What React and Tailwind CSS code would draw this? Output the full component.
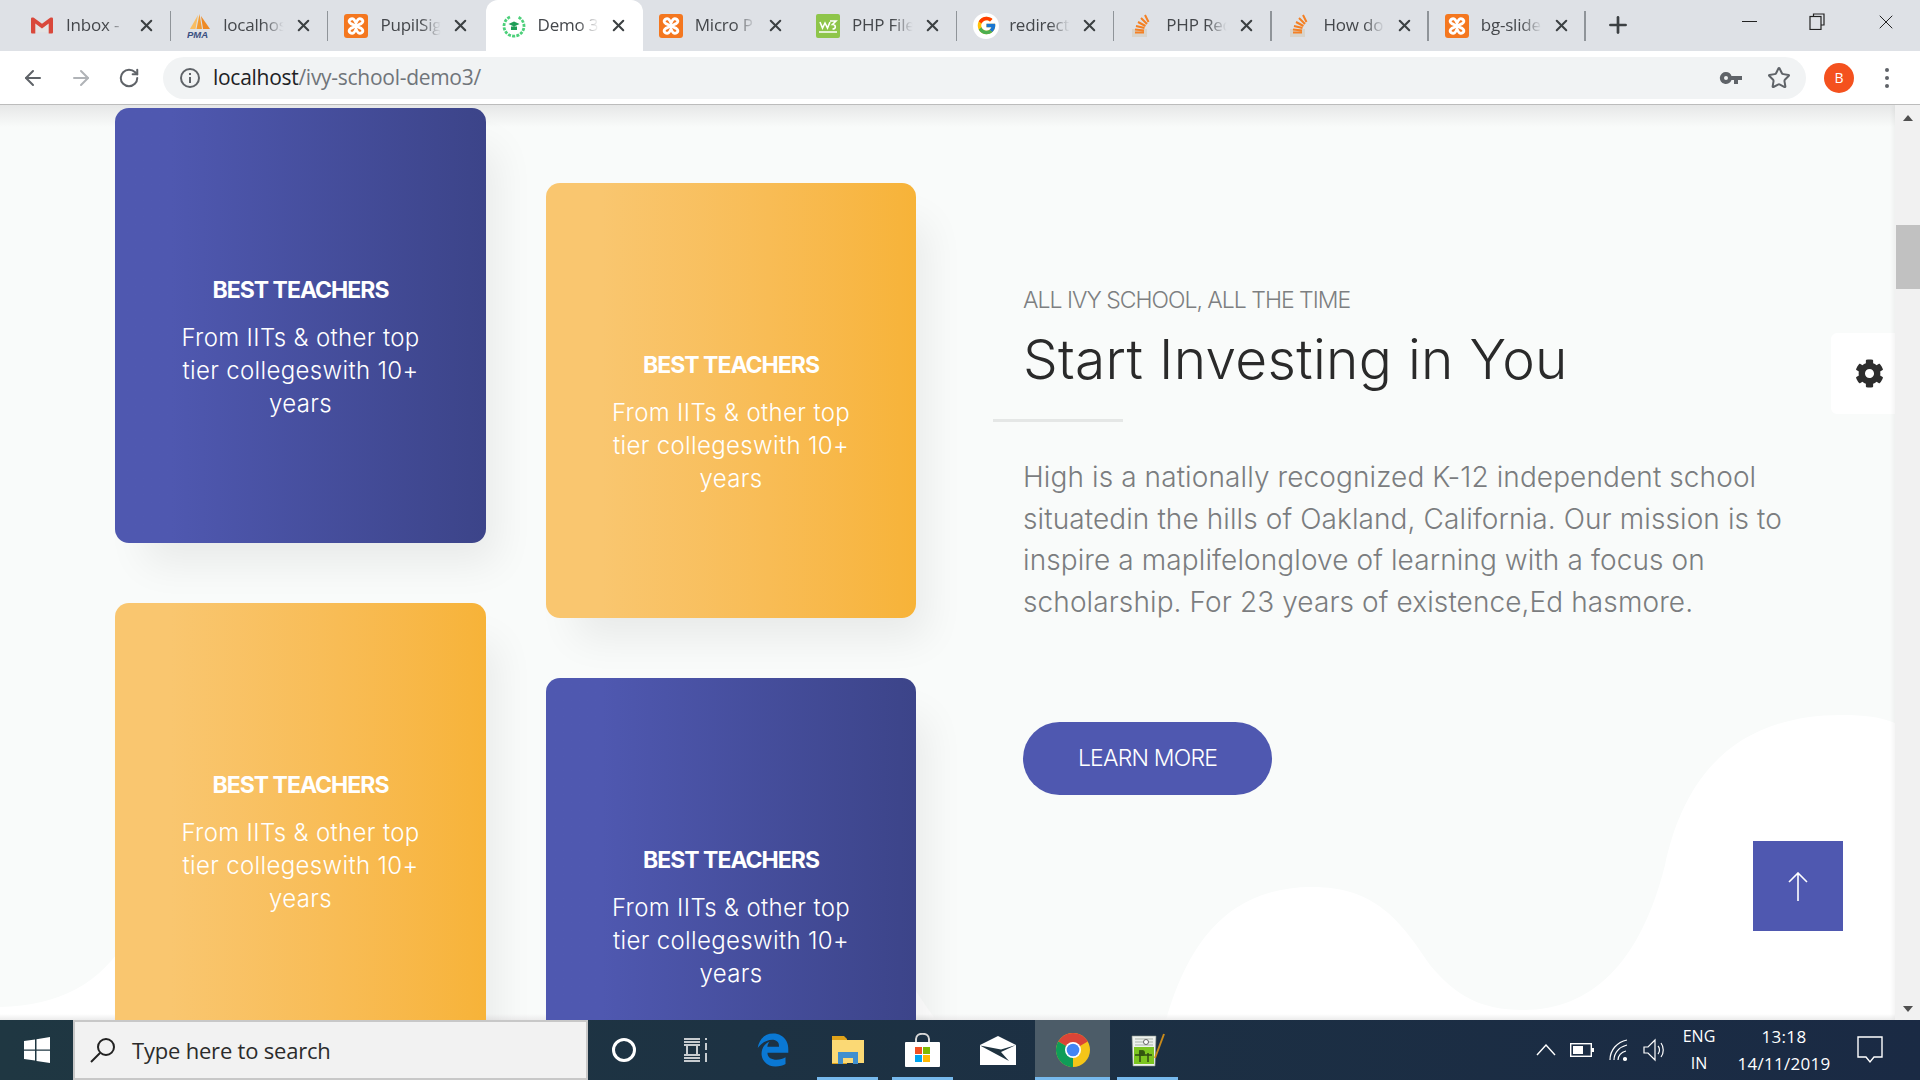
import React from "react";
import { ArrowLeft, ArrowRight, RotateCw, Star, Plus, X } from "lucide-react";
import { FaCog, FaEdgeLegacy } from "react-icons/fa";
import { FcGoogle } from "react-icons/fc";

const Gmail = () => (
  <svg width="22" height="17" viewBox="0 0 23 20" preserveAspectRatio="none" className="ml-[1px]">
    <path d="M2 2 L11.5 10 L21 2 V18 H2 Z" fill="#e4e4e4" />
    <path d="M0 2 C0 .5 1.500 0 3 1 L11.5 8 L20 1 C21.500 0 23 .5 23 2 V18 C23 19 22.500 19.500 21.500 19.500 H18.500 V7.500 L11.500 13.500 L4.500 7.500 V19.500 H1.500 C.5 19.500 0 19 0 18 Z" fill="#d9483b" />
  </svg>
);
const Pma = () => (
  <svg width="24" height="24" viewBox="0 0 24 24">
    <path d="M3 15 L11 1 L8.500 15 Z" fill="#f8bd62" />
    <path d="M9.500 15 L12.500 0 L15 15 Z" fill="#f29b32" />
    <path d="M16 15 L14 2 L23 15 Z" fill="#ee8a25" />
    <text x="0" y="23.500" fontSize="9.500" fontWeight="700" fontStyle="italic" fill="#3b4f81" fontFamily="Liberation Sans, sans-serif">PMA</text>
  </svg>
);
const Xampp = () => (
  <svg width="24" height="24" viewBox="0 0 24 24">
    <rect x="0" y="0" width="24" height="24" rx="3" fill="#f4771f" />
    <path d="M6 5.500 C9 3.500 10.500 5.500 12 9 C13.500 5.500 15 3.500 18 5.500 C20 7.500 18 10 15 10.500 C13 11 13 13 15 13.500 C18 14 20 16.500 18 18.500 C15 20.500 13.500 18.500 12 15 C10.500 18.500 9 20.500 6 18.500 C4 16.500 6 14 9 13.500 C11 13 11 11 9 10.500 C6 10 4 7.500 6 5.500 Z" fill="none" stroke="#fff" strokeWidth="2.800" />
  </svg>
);
const W3 = () => (
  <svg width="24" height="24" viewBox="0 0 24 24">
    <rect width="24" height="24" rx="2" fill="#8ec54a" />
    <path d="M4 8 L6.500 14 L9 9 L11.500 14 L14 8 M14 7 H20 L16.500 10.500 C20 10.500 20.500 15 16.500 15 M3 18 H21" fill="none" stroke="#fff" strokeWidth="1.600" />
  </svg>
);
const Ivy = () => (
  <svg width="24" height="28" viewBox="0 0 24 28">
    <path d="M8 5 A10 10 0 1 0 16 5" fill="none" stroke="#4cd07a" strokeWidth="2.800" strokeDasharray="3 1.200" />
    <path d="M6.500 12 L12 9.500 L17.500 12 L12 14.500 Z M9 14.500 H15 V18 H9 Z" fill="#1f9d57" />
  </svg>
);
const Stack = () => (
  <svg width="22" height="26" viewBox="0 0 22 26">
    <path d="M2 16 V24 H17 V16" fill="#d8d4cc" />
    <path d="M5 19.500 H14 M5 16.500 L14 17.500 M6 13 L14.500 15 M8 9 L15.500 13 M11 5 L17 11 M15 2 L18.500 9" stroke="#f48024" strokeWidth="2" fill="none" />
  </svg>
);
const GIcon = () => (
  <span className="flex h-[26px] w-[26px] items-center justify-center rounded-full bg-white">
    <FcGoogle size={21} />
  </span>
);

const tabs = [
  { label: "Inbox -", Icon: Gmail },
  { label: "localhost", Icon: Pma },
  { label: "PupilSig", Icon: Xampp },
  { label: "Demo 3", Icon: Ivy, active: true },
  { label: "Micro P", Icon: Xampp },
  { label: "PHP File", Icon: W3 },
  { label: "redirect", Icon: GIcon },
  { label: "PHP Req", Icon: Stack },
  { label: "How do", Icon: Stack },
  { label: "bg-slide", Icon: Xampp },
];

function Tab({ label, Icon, active, noSep }) {
  return (
    <div className={active ? "relative flex h-[51px] w-[157.200px] shrink-0 items-center rounded-t-[12px] bg-white pl-[16px]" : "relative flex h-[51px] w-[157.200px] shrink-0 items-center pl-[16px]"}>
      <div className="flex w-[36px] shrink-0 items-center"><Icon /></div>
      <div className="mb-[2px] w-[62px] overflow-hidden whitespace-nowrap font-['Open_Sans',sans-serif] text-[17px] tracking-[-0.2px] text-[#44474b] [mask-image:linear-gradient(to_right,black_65%,transparent_98%)]">{label}</div>
      <X size={19} strokeWidth={2.600} className="ml-[9px] text-[#3c4043]" />
      {!noSep && <div className="absolute right-0 top-[11px] h-[30px] w-[1.500px] bg-[#8f9499]" />}
    </div>
  );
}

function BrowserChrome() {
  return (
    <div className="shrink-0">
      <div className="flex h-[51px] items-start bg-[#dee1e6] pl-[14px]">
        {tabs.map((t, i) => (
          <Tab key={i} {...t} noSep={t.active || i === 2 || i === 4} />
        ))}
        <Plus size={26} strokeWidth={2.500} className="ml-[19px] mt-[12px] text-[#3c4043]" />
        <div className="ml-auto flex h-[43px] items-center text-[#3c4043]">
          <div className="flex w-[68px] justify-center"><div className="h-[1.500px] w-[15px] bg-[#222]" /></div>
          <div className="flex w-[68px] justify-center">
            <svg width="16" height="17" viewBox="0 0 16 17" fill="none" stroke="#222" strokeWidth="1.200"><path d="M4.500 3 V1 H15 V12 H12" /><rect x="1" y="3.500" width="11" height="13" /></svg>
          </div>
          <div className="flex w-[69px] justify-center">
            <X size={24} strokeWidth={1} className="text-[#222]" />
          </div>
        </div>
      </div>
      <div className="flex h-[54px] items-center border-b border-[#bcbcbc] bg-white">
        <div className="flex w-[163px] shrink-0 items-center">
          <ArrowLeft size={24} strokeWidth={2} className="ml-[21px] text-[#5f6368]" />
          <ArrowRight size={24} strokeWidth={2} className="ml-[24px] text-[#b0b3b7]" />
          <RotateCw size={22} strokeWidth={2.200} className="ml-[25px] text-[#5f6368]" />
        </div>
        <div className="flex h-[42px] w-[1643px] items-center rounded-full bg-[#f1f3f4] pl-[16px]">
          <svg width="22" height="22" viewBox="0 0 22 22" fill="none" stroke="#5f6368" strokeWidth="2"><circle cx="11" cy="11" r="9" /><path d="M11 10 V16 M11 6 V8" /></svg>
          <div className="ml-[12px] mt-[1px] font-['Open_Sans',sans-serif] text-[21px] tracking-[-0.28px] text-[#202124]">localhost<span className="text-[#70757a]">/ivy-school-demo3/</span></div>
          <div className="ml-auto flex items-center pr-[15px]">
            <svg width="24" height="14" viewBox="0 0 24 14" fill="#5f6368"><path d="M7 1 A6 6 0 1 0 12.500 9 H15 V13 H19 V9 H23 V5 H12.500 A6 6 0 0 0 7 1 Z M7 5 A2 2 0 1 1 7 9 A2 2 0 0 1 7 5 Z" fillRule="evenodd" /></svg>
            <Star size={24} strokeWidth={2} className="ml-[24px] text-[#5f6368]" />
          </div>
        </div>
        <div className="ml-[18px] flex h-[30px] w-[30px] items-center justify-center rounded-full bg-[#f4511e] font-['Open_Sans',sans-serif] text-[14px] text-white">B</div>
        <div className="ml-[31px] flex flex-col gap-[4px]">
          <span className="h-[4px] w-[4px] rounded-full bg-[#5f6368]" />
          <span className="h-[4px] w-[4px] rounded-full bg-[#5f6368]" />
          <span className="h-[4px] w-[4px] rounded-full bg-[#5f6368]" />
        </div>
      </div>
    </div>
  );
}

const blue = "flex h-[435px] shrink-0 flex-col items-center rounded-[14px] bg-gradient-to-r from-[#4f58b0] from-15% to-[#3c4489] pt-[164px] text-center text-white shadow-[20px_30px_40px_-10px_rgba(0,0,0,0.07)]";
const orange = "flex h-[435px] shrink-0 flex-col items-center rounded-[14px] bg-gradient-to-r from-[#f9c66f] from-15% to-[#f7b338] pt-[164px] text-center text-white shadow-[20px_30px_40px_-10px_rgba(0,0,0,0.07)]";

function Card({ cls }) {
  return (
    <div className={cls}>
      <div className="font-['Inter',sans-serif] text-[23px] leading-[36px] font-bold tracking-[-1px]">BEST TEACHERS</div>
      <div className="mt-[13px] font-['Inter',sans-serif] text-[24px] leading-[33px] font-light tracking-[0.35px]">
        From IITs &amp; other top<br />tier collegeswith 10+<br />years
      </div>
    </div>
  );
}

function Content() {
  return (
    <div className="relative flex min-h-0 flex-1 overflow-hidden bg-[#f9fbfa]">
      <div className="relative min-w-0 flex-1 overflow-hidden">
        <svg className="absolute left-0 top-0" width="1895" height="915" viewBox="0 0 1895 915" fill="#ffffff">
          <path d="M1166 915 C1185 850,1220 782,1312 782 C1375 782,1400 815,1430 860 C1455 890,1480 905,1523 905 C1590 905,1640 860,1665 760 C1680 690,1720 610,1842 610 C1865 610,1880 612,1895 618 V915 Z" />
          <path d="M0 902 C60 900,100 880,130 830 L300 830 L300 915 L0 915 Z" />
          <path d="M800 830 L900 860 C915 885,925 900,936 915 L800 915 Z" />
        </svg>
        <div className="pointer-events-none absolute inset-x-0 top-0 h-[22px] bg-gradient-to-b from-[#e6e7e7] to-transparent" />
        <div className="pointer-events-none absolute inset-x-0 bottom-0 h-[6px] bg-gradient-to-t from-[#ececec] to-transparent" />
        <div className="relative flex pl-[115px]">
          <div className="flex w-[371px] flex-col gap-[60px] pt-[3px]">
            <Card cls={blue} />
            <Card cls={orange} />
          </div>
          <div className="ml-[60px] flex w-[370px] flex-col gap-[60px] pt-[78px]">
            <Card cls={orange} />
            <Card cls={blue} />
          </div>
          <div className="ml-[77px] flex w-[780px] flex-col pt-[178px]">
            <div className="ml-[30px] font-['Inter',sans-serif] text-[23px] leading-[34px] font-light tracking-[-1px] text-[#7d7f81]">ALL IVY SCHOOL, ALL THE TIME</div>
            <div className="ml-[30px] mt-[7px] font-['Inter',sans-serif] text-[55px] leading-[70px] font-[350] tracking-[0.3px] text-[#2a2a2a]">Start Investing in You</div>
            <div className="mt-[25px] h-[3px] w-[130px] bg-[#e5e7e6]" />
            <div className="ml-[30px] mt-[35px] font-['Inter',sans-serif] text-[28px] leading-[41.700px] font-light tracking-[0.1px] whitespace-nowrap text-[#7b7d7f]">
              High is a nationally recognized K-12 independent school<br />
              situatedin the hills of Oakland, California. Our mission is to<br />
              inspire a maplifelonglove of learning with a focus on<br />
              scholarship. For 23 years of existence,Ed hasmore.
            </div>
            <div className="ml-[30px] mt-[98px] flex h-[73px] w-[249px] items-center justify-center rounded-full bg-[#4f58b0] font-['Inter',sans-serif] text-[23px] font-light tracking-[-0.8px] text-white">LEARN MORE</div>
          </div>
        </div>
        <div className="absolute right-0 top-[228px] flex h-[81px] w-[64px] items-center justify-center rounded-l-[6px] bg-white pl-[12px] text-[#2d2d2d]">
          <FaCog size={29} />
        </div>
        <div className="absolute right-[52px] top-[736px] flex h-[90px] w-[90px] items-center justify-center bg-[#4f58b0]">
          <svg width="20" height="29" viewBox="0 0 20 29" fill="none" stroke="#fff" strokeWidth="1.600"><path d="M10 29 V1 M1 10 L10 1 L19 10" /></svg>
        </div>
      </div>
      <div className="relative flex w-[25px] shrink-0 flex-col items-center bg-[#f1f1f1] shadow-[-2px_0_4px_rgba(0,0,0,0.05)]">
        <div className="mt-[10px] h-0 w-0 border-x-[5px] border-b-[6px] border-x-transparent border-b-[#505050]" />
        <div className="mt-[104px] h-[64px] w-[24px] self-end bg-[#c1c1c1]" />
        <div className="mt-auto mb-[8px] h-0 w-0 border-x-[5px] border-t-[6px] border-x-transparent border-t-[#505050]" />
      </div>
    </div>
  );
}

const Edge = () => <FaEdgeLegacy size={34} color="#0a78d4" />;
const Folder = () => (
  <svg width="34" height="30" viewBox="0 0 34 30">
    <path d="M1 1 H13 L16 4 V29 H1 Z" fill="#e0a31a" />
    <path d="M1 5 H33 V28 H1 Z" fill="#fbd975" />
    <path d="M7 29 V17 H27 V29 H22 V23 H12 V29 Z" fill="#3f8fcf" />
  </svg>
);
const Store = () => (
  <svg width="35" height="34" viewBox="0 0 35 34">
    <path d="M11 10 V6 C11 -1 24 -1 24 6 V10" fill="none" stroke="#d8d8d8" strokeWidth="2" />
    <rect x="0" y="9" width="35" height="25" rx="1" fill="#fff" />
    <rect x="10" y="14" width="7" height="7" fill="#f25022" />
    <rect x="18" y="14" width="7" height="7" fill="#7fba00" />
    <rect x="10" y="22" width="7" height="7" fill="#00a4ef" />
    <rect x="18" y="22" width="7" height="7" fill="#ffb900" />
  </svg>
);
const Mail = () => (
  <svg width="36" height="29" viewBox="0 0 36 29">
    <path d="M0 9 L18 0 L36 9 V29 H0 Z" fill="#fff" />
    <path d="M0 9.500 L21 13.500 L36 9 L21 16 L29 25 Z" fill="#1f3340" />
  </svg>
);
const Chrome = () => (
  <svg width="34" height="34" viewBox="0 0 34 34">
    <circle cx="17" cy="17" r="17" fill="#f5c518" />
    <path d="M17 17 L2.300 8.500 A17 17 0 0 1 31.700 8.500 Z" fill="#db4437" />
    <path d="M17 17 L2.300 8.500 A17 17 0 0 0 17 34 L17 34 Z" fill="#0f9d58" />
    <circle cx="17" cy="17" r="8" fill="#fff" />
    <circle cx="17" cy="17" r="6.300" fill="#4285f4" />
  </svg>
);
const Npp = () => (
  <svg width="34" height="34" viewBox="0 0 34 34">
    <path d="M1 3 H25 L24 33 H2 Z" fill="#eef2ee" stroke="#8a938a" strokeWidth=".6" />
    <rect x="3" y="14" width="20" height="17" fill="#7cc520" />
    <path d="M4 6 H22 M4 9 H22 M4 12 H22" stroke="#a9b3a9" />
    <path d="M4 22 H21 M9 17 L9 29 M17 20 V29" stroke="#2f4a13" strokeWidth="1.500" />
    <circle cx="11" cy="20" r="3" fill="#32560f" />
    <circle cx="15" cy="9" r="2.500" fill="#fff" stroke="#444" strokeWidth=".8" />
    <path d="M33 1 L24 25" stroke="#c98a1a" strokeWidth="2" />
  </svg>
);

function Slot({ children, bar, active }) {
  return (
    <div className={active ? "relative flex h-[60px] w-[75px] shrink-0 items-center justify-center bg-[#4c5c68]" : "relative flex h-[60px] w-[75px] shrink-0 items-center justify-center"}>
      {children}
      {bar && <div className={active ? "absolute bottom-0 left-0 h-[3px] w-[75px] bg-[#76b9ed]" : "absolute bottom-0 left-[7px] h-[3px] w-[61px] bg-[#76b9ed]"} />}
    </div>
  );
}

function Taskbar() {
  return (
    <div className="flex h-[60px] shrink-0 items-center bg-gradient-to-r from-[#1f3742] to-[#1a2a44] font-['Open_Sans',sans-serif] text-white">
      <div className="flex w-[73px] shrink-0 justify-center">
        <svg width="26" height="26" viewBox="0 0 26 26" fill="#fff"><path d="M0 4 L11 2.500 V12.500 H0 Z M12.500 2.300 L26 0 V12.500 H12.500 Z M0 13.800 H11 V23.500 L0 22 Z M12.500 13.800 H26 V26 L12.500 24 Z" /></svg>
      </div>
      <div className="flex h-[60px] w-[515px] shrink-0 items-center border-x-2 border-y-2 border-[#c8c8c8] bg-[#f2f2f2] pl-[15px] text-[22px] text-[#2b2b2b]">
        <svg width="26" height="26" viewBox="0 0 26 26" fill="none" stroke="#222" strokeWidth="2"><circle cx="16" cy="10" r="8" /><path d="M10 16 L1 25" /></svg>
        <span className="ml-[16px] tracking-[-0.2px]">Type here to search</span>
      </div>
      <div className="flex w-[72px] shrink-0 justify-center">
        <div className="h-[24px] w-[24px] rounded-full border-[3px] border-white" />
      </div>
      <Slot>
        <svg width="26" height="26" viewBox="0 0 26 26" fill="none" stroke="#fff" strokeWidth="1.500" className="-translate-x-[2px]"><path d="M1 2 H17 M1 5 H17 M1 8 H17 M1 18 H17 M1 21 H17 M1 24 H17 M4 9 V17 M14 9 V17 M23 1 V3 M23 6 V13 M23 16 V25" /></svg>
      </Slot>
      <Slot><Edge /></Slot>
      <Slot bar><Folder /></Slot>
      <Slot bar><Store /></Slot>
      <Slot><Mail /></Slot>
      <Slot bar active><Chrome /></Slot>
      <Slot bar><Npp /></Slot>
      <div className="ml-auto flex items-center">
        <div className="flex w-[36px] justify-center">
          <svg width="20" height="12" viewBox="0 0 20 12" fill="none" stroke="#fff" strokeWidth="1.400"><path d="M1 11 L10 1 L19 11" /></svg>
        </div>
        <div className="flex w-[36px] justify-center">
          <svg width="24" height="14" viewBox="0 0 24 14"><rect x=".7" y=".7" width="20.600" height="12.600" fill="none" stroke="#fff" strokeWidth="1.400" /><rect x="3" y="3" width="10" height="8" fill="#fff" /><rect x="22" y="5" width="2" height="4" fill="#fff" /></svg>
        </div>
        <div className="flex w-[38px] justify-center">
          <svg width="20" height="24" viewBox="0 0 20 24" fill="none" stroke="#fff" strokeWidth="1.200"><path d="M1 22 C1 12 8 4 18 2 M5 22 C5 15 10 9 18 7 M9 22 C9 18 12 14 17 13" /><circle cx="16" cy="21" r="1.500" fill="#fff" /></svg>
        </div>
        <div className="flex w-[34px] justify-center">
          <svg width="24" height="24" viewBox="0 0 24 24" fill="none" stroke="#fff" strokeWidth="1.200"><path d="M1 9 H5 L12 2 V22 L5 15 H1 Z M15 8 C17 10 17 14 15 16 M18 5 C21 9 21 15 18 19" /></svg>
        </div>
        <div className="flex w-[54px] flex-col items-center text-[16px] leading-[27px]"><span>ENG</span><span>IN</span></div>
        <div className="flex w-[116px] flex-col items-center text-[17px] leading-[27px] tracking-[0.3px]"><span>13:18</span><span>14/11/2019</span></div>
        <div className="flex w-[56px] justify-center">
          <svg width="26" height="28" viewBox="0 0 26 28" fill="none" stroke="#fff" strokeWidth="1.400"><path d="M1 1 H25 V21 H17 L13 26 L9 21 H1 Z" /></svg>
        </div>
        <div className="w-[22px]" />
      </div>
    </div>
  );
}

export default function App() {
  return (
    <div className="flex h-[1080px] w-[1920px] flex-col overflow-hidden">
      <BrowserChrome />
      <Content />
      <Taskbar />
    </div>
  );
}
